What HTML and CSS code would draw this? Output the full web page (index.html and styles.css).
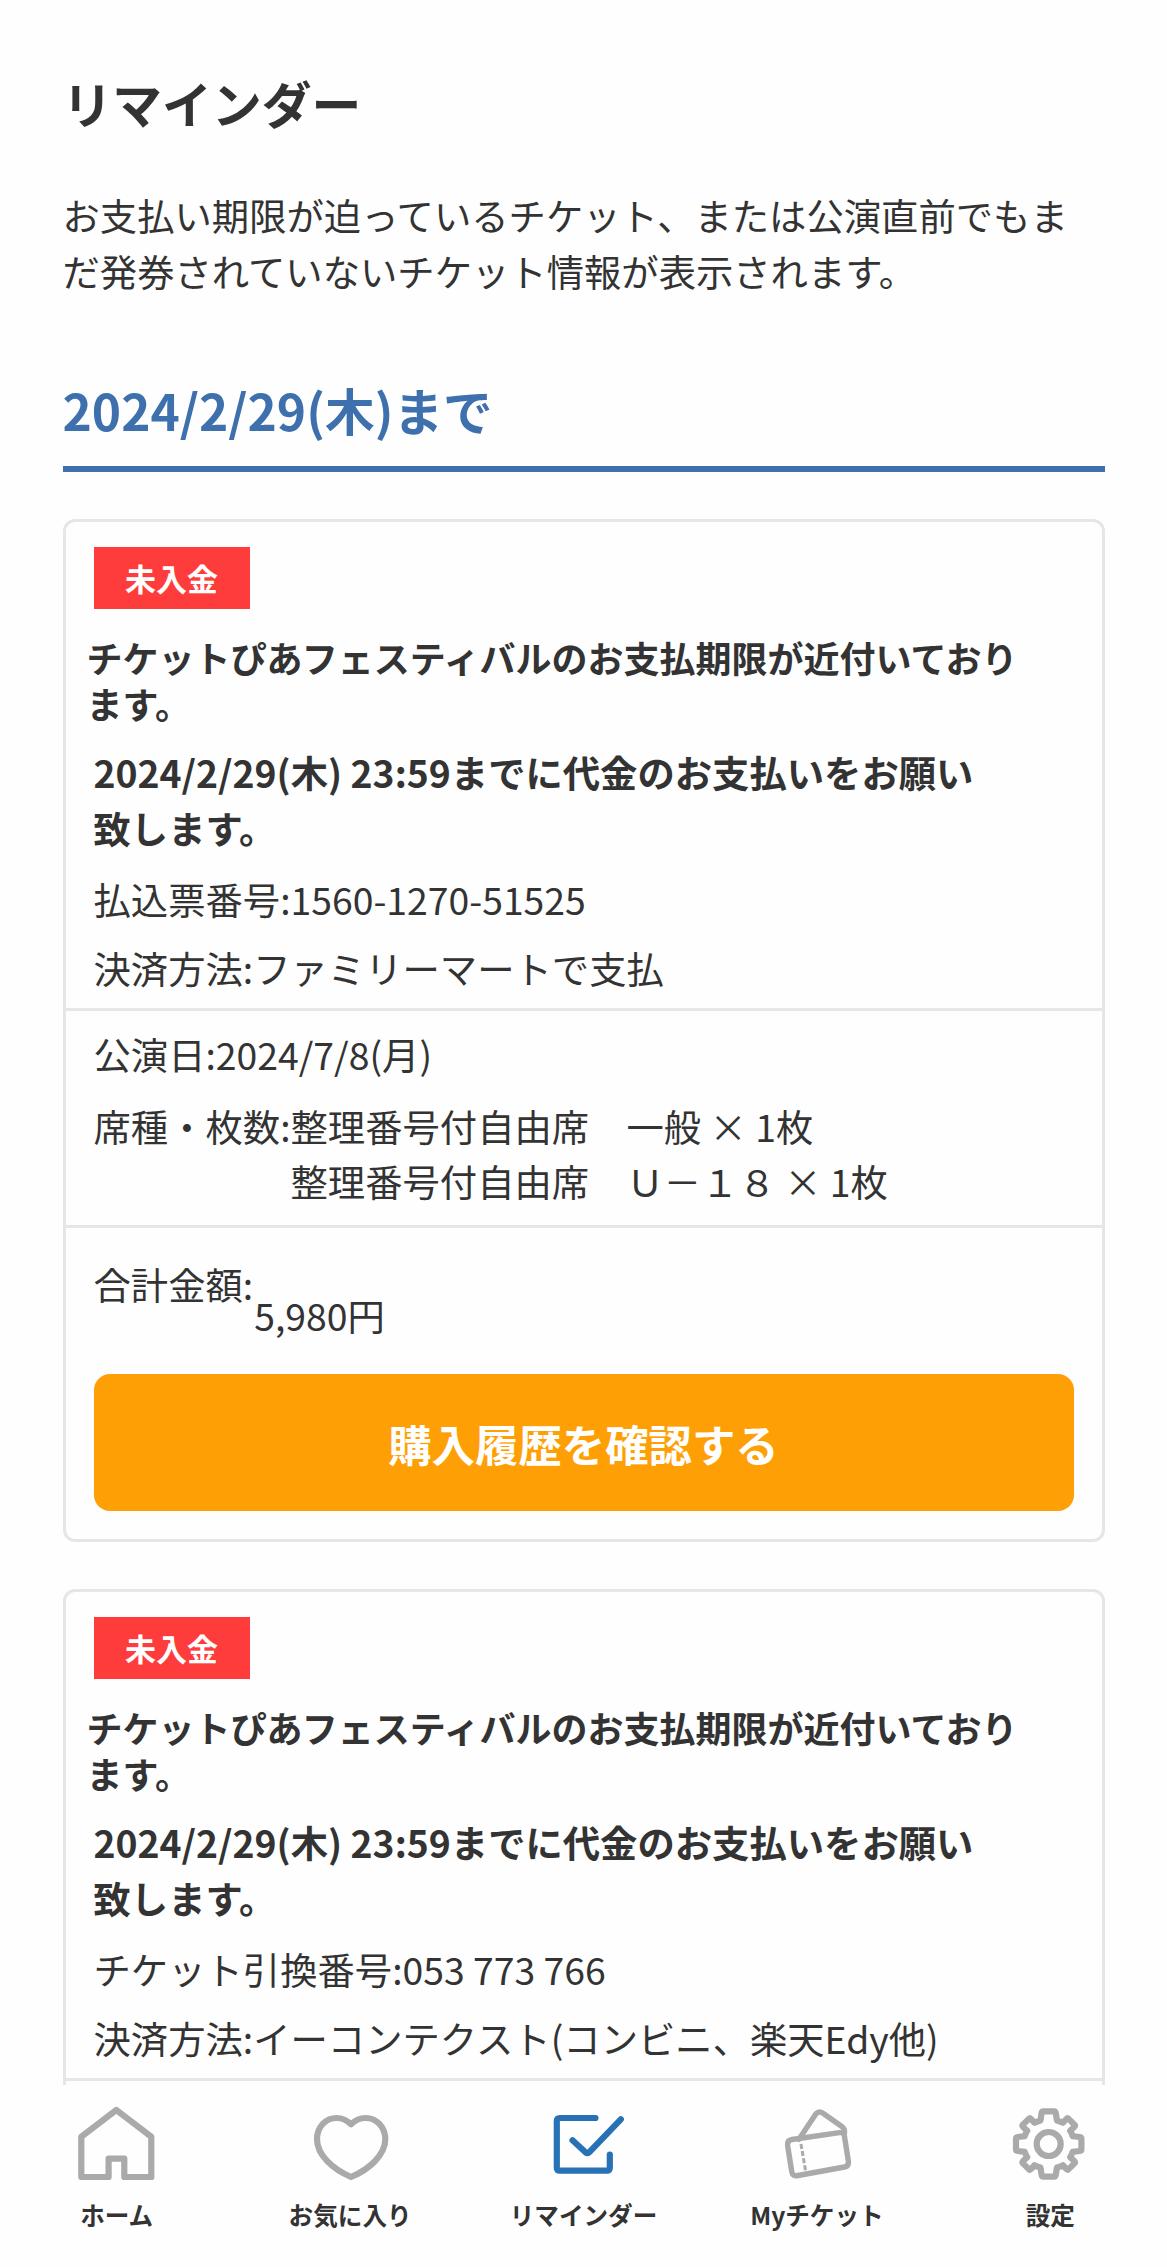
FILE: index.html
```html
<!DOCTYPE html>
<html lang="ja">
<head>
    <meta charset="UTF-8">
    <title>リマインダー</title>
    <link rel="stylesheet" href="styles.css">
</head>
<body>

<main class="content">
    <h1>リマインダー</h1>
    <p class="lead">お支払い期限が迫っているチケット、または公演直前でもまだ発券されていないチケット情報が表示されます。</p>

    <h2>2024/2/29(木)まで</h2>

    <section class="card">
        <div class="card-section">
            <span class="badge">未入金</span>
            <h3>チケットぴあフェスティバルのお支払期限が近付いております。</h3>
            <p class="deadline">2024/2/29(木) 23:59までに代金のお支払いをお願い致します。</p>
            <p class="row">払込票番号:1560-1270-51525</p>
            <p class="row">決済方法:ファミリーマートで支払</p>
        </div>
        <div class="card-section event">
            <p class="row">公演日:2024/7/8(月)</p>
            <div class="row seats">
                <span>席種・枚数:</span>
                <div>
                    <p>整理番号付自由席　一般 × 1枚</p>
                    <p>整理番号付自由席　Ｕ－１８ × 1枚</p>
                </div>
            </div>
        </div>
        <div class="card-section payment">
            <div class="total">
                <span>合計金額:</span>
                <span class="price">5,980円</span>
            </div>
            <button class="history-btn">購入履歴を確認する</button>
        </div>
    </section>

    <section class="card">
        <div class="card-section">
            <span class="badge">未入金</span>
            <h3>チケットぴあフェスティバルのお支払期限が近付いております。</h3>
            <p class="deadline">2024/2/29(木) 23:59までに代金のお支払いをお願い致します。</p>
            <p class="row">チケット引換番号:053 773 766</p>
            <p class="row">決済方法:イーコンテクスト(コンビニ、楽天Edy他)</p>
        </div>
        <div class="card-section event"></div>
    </section>
</main>

<nav class="tabbar">
    <a class="tab">
        <svg viewBox="0 0 90 80">
            <path d="M44.3 8 L79.3 34.7 V75 H52.3 V56.7 H36.6 V75 H9.3 V34.7 Z"/>
        </svg>
        ホーム
    </a>
    <a class="tab">
        <svg viewBox="0 0 90 80">
            <path d="M46 22.3 C41.5 18 37 16 31.7 16 C20 16 12 25.5 12 37.3 C12 53 28 67.5 46 75 C64 67.5 80.3 53 80.3 37.3 C80.3 25.5 72 16 60.5 16 C55 16 50.5 18 46 22.3 Z"/>
        </svg>
        お気に入り
    </a>
    <a class="tab active">
        <svg viewBox="0 0 90 80">
            <path d="M56.5 16 H20.8 Q17.8 16 17.8 19 V65.7 Q17.8 68.7 20.8 68.7 H67.8 Q70.8 68.7 70.8 65.7 V52.7"/>
            <path d="M33.5 38.3 L46.5 50.3 Q48.5 52 50.5 50 L81.8 17.3"/>
        </svg>
        リマインダー
    </a>
    <a class="tab">
        <svg viewBox="0 0 90 80">
            <path class="ticket" d="M20 37.5 L67.5 30.7 Q71.8 30 72.5 34.5 L76.4 59.5 Q77 64 72.5 65 L26 73.5 Q20.6 74.5 19.8 70 L15.6 43.5 Q15 38.3 20 37.5 Z"/>
            <path class="ticket" d="M27 37.3 L43.8 12 Q47.3 8.5 51 11.3 L70.5 25 Q73 27 72.5 32"/>
            <path class="stub" d="M29 42 L33.5 68.5"/>
        </svg>
        Myチケット
    </a>
    <a class="tab">
        <svg viewBox="0 0 90 80">
            <path d="M38.4 9.3 H49 Q50.5 9.3 50.8 11 L51.9 18.4 Q55 19.2 58 20.8 L61.3 17 Q62.4 15.8 63.6 16.9 L69.4 22.6 Q70.4 23.5 69.5 24.7 L65.2 28.8 Q67 31.5 67.6 34.2 L74.8 35 Q76.4 35.2 76.4 36.8 V47.2 Q76.4 48.8 74.8 49 L67.6 49.8 Q67 52.5 65.2 55.2 L69.5 59.3 Q70.4 60.5 69.4 61.4 L63.6 67.1 Q62.4 68.2 61.3 67 L58 63.2 Q55 64.8 51.9 65.6 L50.8 73 Q50.5 74.7 49 74.7 H38.4 Q36.9 74.7 36.6 73 L35.5 65.6 Q32.4 64.8 29.4 63.2 L26.1 67 Q25 68.2 23.8 67.1 L18 61.4 Q17 60.5 17.9 59.3 L22.2 55.2 Q20.4 52.5 19.8 49.8 L12.6 49 Q11 48.8 11 47.2 V36.8 Q11 35.2 12.6 35 L19.8 34.2 Q20.4 31.5 22.2 28.8 L17.9 24.7 Q17 23.5 18 22.6 L23.8 16.9 Q25 15.8 26.1 17 L29.4 20.8 Q32.4 19.2 35.5 18.4 L36.6 11 Q36.9 9.3 38.4 9.3 Z"/>
            <circle cx="43.7" cy="42" r="12"/>
        </svg>
        設定
    </a>
</nav>

</body>
</html>
```
FILE: styles.css
```css
* {
    box-sizing: border-box;
}

body {
    font-family: "Noto Sans CJK JP", sans-serif;
    font-size: 37.33px;
    line-height: 55.5px;
    color: #333;
    background: #fefefe;
    margin: 0;
    height: 2267px;
    display: flex;
    flex-direction: column;
    overflow: hidden;
}

h1, h2, h3, p {
    margin: 0;
}

.content {
    flex: 1;
    min-height: 0;
    overflow: hidden;
    padding: 65px 62.5px 0;
}

h1 {
    font-size: 49.8px;
    line-height: 75px;
}

.lead {
    margin-top: 48px;
    padding-right: 30px;
}

h2 {
    margin-top: 72px;
    padding-bottom: 19px;
    font-size: 49.7px;
    line-height: 76px;
    color: #3d70ad;
    border-bottom: 6px solid #3d70ad;
}

.card {
    margin-top: 47px;
    border: 3px solid #e6e6e6;
    border-radius: 12px;
}

.card-section {
    padding: 25px 28px 12px;
}

.badge {
    display: block;
    width: 156px;
    font-size: 31px;
    line-height: 62px;
    font-weight: bold;
    text-align: center;
    color: #fff;
    background: #ff3c3c;
}

h3 {
    margin: 25px 0 0 -7px;
    padding-right: 40px;
    font-size: 36px;
    line-height: 46px;
}

.deadline {
    margin: 19px 0 16px;
    padding-right: 90px;
    font-weight: bold;
}

.row {
    margin-top: 13px;
}

.event {
    padding-top: 3px;
    padding-bottom: 15px;
    border-top: 3px solid #e6e6e6;
}

.seats {
    display: flex;
    margin-top: 16px;
}

.payment {
    padding-top: 29px;
    padding-bottom: 28px;
    border-top: 3px solid #e6e6e6;
}

.total {
    display: flex;
}

.price {
    margin-top: 31px;
    padding-left: 1px;
}

.history-btn {
    display: block;
    width: 100%;
    height: 137px;
    margin-top: 31px;
    padding: 0;
    border: none;
    border-radius: 16px;
    font-family: inherit;
    font-size: 43.4px;
    font-weight: bold;
    color: #fff;
    background: #ff9f06;
    cursor: pointer;
}

.tabbar {
    display: flex;
    height: 182px;
    padding-top: 17px;
    background: #fefefe;
}

.tab {
    flex: 1;
    display: flex;
    flex-direction: column;
    align-items: center;
    font-size: 24.6px;
    line-height: 36px;
    font-weight: bold;
    white-space: nowrap;
}

.tab svg {
    width: 90px;
    height: 80px;
    margin-bottom: 14px;
    fill: none;
    stroke: #aaa;
    stroke-width: 6.2;
    stroke-linecap: round;
    stroke-linejoin: round;
}

.active svg {
    stroke: #2672b5;
}

.tab .ticket {
    stroke-width: 5.4;
}

.tab .stub {
    stroke-width: 3;
    stroke-linecap: butt;
    stroke-dasharray: 5 2.2;
}
```
